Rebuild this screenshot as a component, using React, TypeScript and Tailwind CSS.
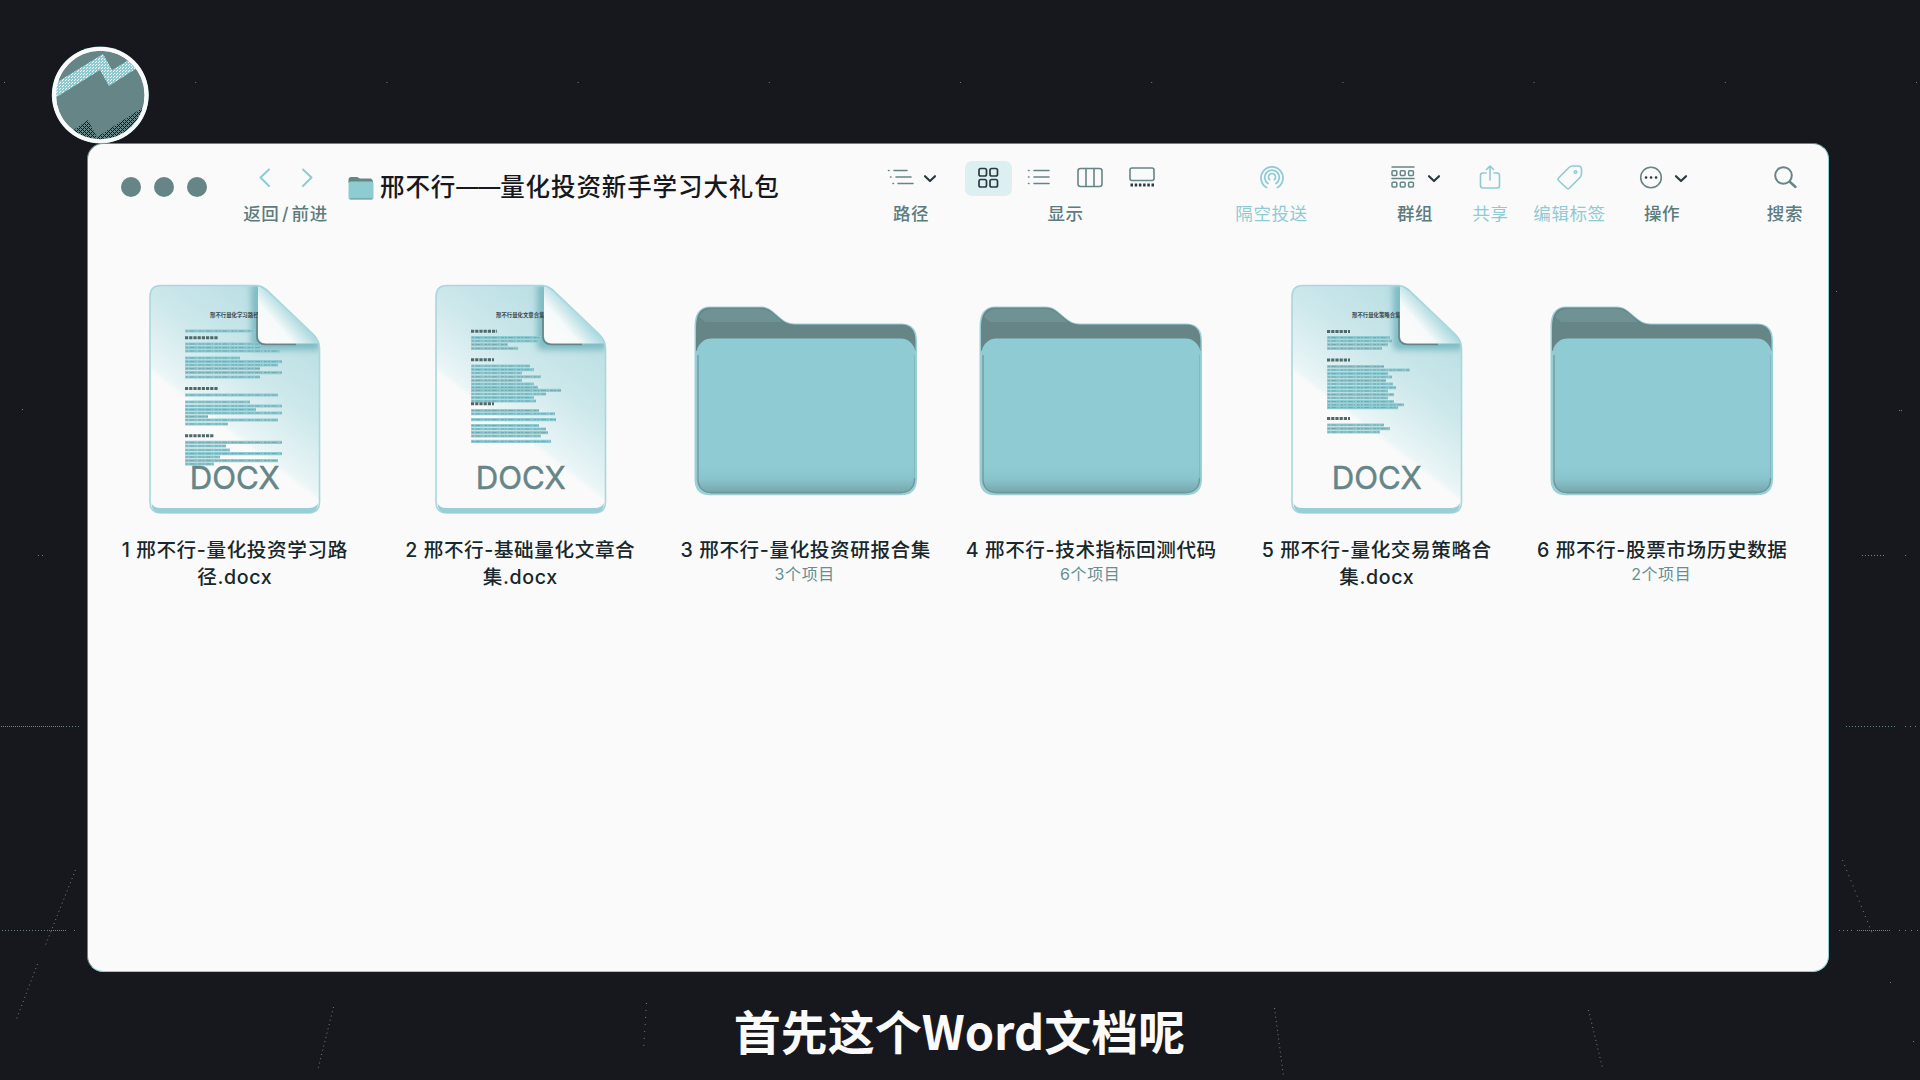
import type { ReactNode } from 'react';

const MID = '#668586';
const LIGHT = '#8ecbd3';

type Line = [y: number, end: number, bold?: boolean];

type Entry = {
  kind: 'doc' | 'folder';
  name: string[];
  note?: string;
  heading?: string;
  lines?: Line[];
};

const files: Entry[] = [
  {
    kind: 'doc',
    name: ['1 邢不行-量化投资学习路', '径.docx'],
    heading: '邢不行量化学习路径',
    lines: [
      [47, 108], [53.7, 70, true], [60, 134], [63.6, 112], [67, 132], [74, 92], [77.6, 134], [81, 130], [84.6, 112],
      [88.6, 134], [93, 112], [104.6, 70, true], [111, 130], [118, 102], [122, 134], [125.6, 108], [129, 134],
      [132.6, 60], [136, 130], [140, 80], [151.8, 66, true], [158.4, 134], [162, 78], [166, 82], [169.6, 134],
      [173, 72], [176.6, 130], [180, 66],
    ],
  },
  {
    kind: 'doc',
    name: ['2 邢不行-基础量化文章合', '集.docx'],
    heading: '邢不行量化文章合集',
    lines: [
      [47.2, 63, true], [53.6, 108], [57, 104], [60.6, 74], [64.4, 84], [75.8, 60, true], [82, 96], [85.6, 100],
      [89, 88], [92.8, 107], [96.4, 88], [100, 100], [103.4, 104], [106.4, 127], [110, 112], [113.6, 100],
      [117, 102], [119.8, 60, true], [126.5, 105], [129.8, 121], [135.6, 122], [141.5, 105], [145, 112],
      [148.6, 114], [152, 107], [157.4, 117],
    ],
  },
  { kind: 'folder', name: ['3 邢不行-量化投资研报合集'], note: '3个项目' },
  { kind: 'folder', name: ['4 邢不行-技术指标回测代码'], note: '6个项目' },
  {
    kind: 'doc',
    name: ['5 邢不行-量化交易策略合', '集.docx'],
    heading: '邢不行量化策略合集',
    lines: [
      [47.4, 60, true], [53.6, 100], [57, 102], [60.6, 98], [64.4, 92], [76, 60, true], [82.5, 94], [86, 120],
      [89.6, 98], [93, 102], [96.6, 96], [100, 103], [103.6, 106], [107, 98], [110.6, 104], [114, 98], [117.6, 104],
      [120.8, 114], [123.6, 108], [134.6, 60, true], [141, 94], [144.6, 100], [148, 90],
    ],
  },
  { kind: 'folder', name: ['6 邢不行-股票市场历史数据'], note: '2个项目' },
];

function DocIcon({ heading, lines, id }: { heading: string; lines: Line[]; id: string }) {
  const outline = 'M13 1.5H109C113 1.5 117 4 121 8L165 50C169 54 171.5 58 171.5 64V218Q171.5 229 160 229H13Q2 229 2 218V13Q2 1.5 13 1.5Z';
  return (
    <svg width="174" height="232" viewBox="0 0 174 232" fill="none">
      <defs>
        <linearGradient id={`${id}-page`} x1="150" y1="20" x2="50" y2="150" gradientUnits="userSpaceOnUse">
          <stop offset="0" stopColor="#b5dde2" />
          <stop offset="0.5" stopColor="#cde8eb" />
          <stop offset="0.84" stopColor="#eaf5f6" />
          <stop offset="0.88" stopColor="#fafafa" />
        </linearGradient>
        <linearGradient id={`${id}-curl`} x1="122" y1="48" x2="144" y2="29" gradientUnits="userSpaceOnUse">
          <stop offset="0" stopColor="#fafafa" />
          <stop offset="0.35" stopColor="#f6fafa" />
          <stop offset="1" stopColor="#aedbe0" />
        </linearGradient>
        <filter id={`${id}-soft`} x="-20%" y="-20%" width="140%" height="140%">
          <feGaussianBlur stdDeviation="3" />
        </filter>
        <clipPath id={`${id}-clip`}>
          <path d={outline} />
        </clipPath>
      </defs>
      <path d={outline} fill={`url(#${id}-page)`} />
      <g clipPath={`url(#${id}-clip)`}>
        <path d="M103 0H130V50H172V66H108Q103 66 103 60Z" fill="#7fbcc4" filter={`url(#${id}-soft)`} />
      </g>
      <text x="62" y="33.2" fontSize="5.4" fontWeight="700" fill="#35484b" className="font-['Noto_Sans_CJK_SC',sans-serif]">{heading}</text>
      {lines.map(([y, end, bold]) => (
        <g key={y}>
          <path d={`M37 ${y}H${end}`} stroke={bold ? '#4d696c' : LIGHT} strokeWidth={bold ? 3 : 3.1} strokeDasharray={bold ? '3.2 1' : undefined} />
          {!bold && <path d={`M38 ${y}H${end}`} stroke="#74a5aa" strokeWidth="1" strokeDasharray="2 1.4 5 1 1 2 3 1" />}
        </g>
      ))}
      <path d="M110 2Q114 3 120 8L165 51Q170 56 171 59.5H117Q110 59 110 52Z" fill={`url(#${id}-curl)`} />
      <path d="M109 34V54Q110 60 117 60.5H148" stroke={MID} strokeWidth="1.6" />
      <path d={outline} stroke="#a9d7dd" strokeWidth="1.6" />
      <path d="M3.5 219Q5 224 13 224H160Q168 224 170 219Q170 229 160 229H13Q3.5 229 3.5 219Z" fill="#98cfd6" />
      <text x="41.8" y="204.5" fontSize="31.8" textLength="90" lengthAdjust="spacingAndGlyphs" fill={MID} stroke={MID} strokeWidth=".5" className="font-['Inter',sans-serif]">DOCX</text>
    </svg>
  );
}

function FolderIcon({ id }: { id: string }) {
  return (
    <svg width="228" height="192" viewBox="0 0 228 192" fill="none">
      <defs>
        <linearGradient id={`${id}-f`} x1="0" y1="160" x2="0" y2="188" gradientUnits="userSpaceOnUse">
          <stop offset="0" stopColor={LIGHT} />
          <stop offset="0.5" stopColor="#89c4cc" />
          <stop offset="0.95" stopColor="#78a8ad" />
        </linearGradient>
      </defs>
      <path d="M3.5 22Q3.5 1.5 19 1.5H70C84 1.5 88 18.5 104 18.5H211Q226 19 226 36V174Q226 190.3 210 190.3H19Q3.5 190.3 3.5 174Z" fill="#9bd0d7" />
      <path d="M5 22Q5 2.5 19 2.5H70C84 2.5 88 19.5 104 19.5H211Q224.5 20 224.5 36V46H5Z" fill={MID} />
      <path d="M8 12Q12 4 20 4H70Q80 4 91 17H14Z" fill="#6f9295" />
      <rect x="5.5" y="33.5" width="219" height="155" rx="15" fill={`url(#${id}-f)`} />
      <path d="M7 50V173Q7 187.5 21 187.5H209Q223.5 187.5 223.5 173" stroke="#70979a" strokeWidth="1.3" />
      <path d="M223.5 50V173" stroke="#83b8be" strokeWidth="1" />
    </svg>
  );
}

function Chevron() {
  return (
    <svg width="14" height="10" viewBox="0 0 14 10" fill="none" stroke="#2b3a3e" strokeWidth="2.2" strokeLinecap="round" strokeLinejoin="round">
      <path d="M2 2.2L7 7L12 2.2" />
    </svg>
  );
}

function Icon({ w = 28, color = MID, sw = 1.6, children }: { w?: number; color?: string; sw?: number; children: ReactNode }) {
  return (
    <svg width={w} height="28" viewBox={`0 0 ${w} 28`} fill="none" stroke={color} strokeWidth={sw} strokeLinecap="round" strokeLinejoin="round">
      {children}
    </svg>
  );
}

function Tool({ label, faded, children }: { label: ReactNode; faded?: boolean; children: ReactNode }) {
  return (
    <div className="flex flex-col items-center">
      <div className="flex h-[38px] items-center">{children}</div>
      <span className={`mt-[5px] h-6 text-[17.5px] leading-6 tracking-[0.6px] whitespace-nowrap ${faded ? 'text-[#8ecbd3]' : 'font-medium text-[#5d7c7e]'}`}>{label}</span>
    </div>
  );
}

const dots = (x1: number, x2: number, y: number, step: number) => <path d={`M${x1} ${y}.5H${x2}`} strokeDasharray={`1 ${step - 1}`} />;

function Backdrop() {
  return (
    <svg className="absolute inset-0" width="1920" height="1080" viewBox="0 0 1920 1080" fill="none" stroke={MID} strokeWidth="1">
      {dots(4, 1920, 82, 191.2)}
      {dots(1, 62, 726, 2)}
      {dots(63, 80, 726, 3)}
      {dots(1846, 1896, 726, 3)}
      {dots(1905, 1918, 726, 5)}
      {dots(2, 48, 930, 3)}
      {dots(49, 66, 930, 2)}
      {dots(74, 75, 930, 2)}
      {dots(1839, 1852, 930, 4)}
      {dots(1857, 1890, 930, 2)}
      {dots(1899, 1920, 930, 6)}
      {dots(1862, 1886, 555, 3)}
      {dots(1905, 1906, 555, 3)}
      {dots(38, 46, 555, 4)}
      {dots(22, 23, 409, 3)}
      {dots(1836, 1837, 291, 3)}
      {dots(1899, 1902, 410, 2)}
      {dots(1890, 1891, 982, 2)}
      {dots(1913, 1914, 1041, 2)}
      <g strokeDasharray="1 3.4">
        <path d="M75.5 870L45.5 945" />
        <path d="M37.5 964L16.5 1019" />
        <path d="M333.5 1007L317.5 1071" />
        <path d="M646.5 1003L643.5 1050" strokeDasharray="1 6" />
        <path d="M1274.5 1008L1283.5 1076" />
        <path d="M1588.5 1010L1602.5 1068" />
        <path d="M1842.5 860L1872.5 934" strokeDasharray="1 4.5" />
      </g>
    </svg>
  );
}

function Avatar() {
  return (
    <svg className="absolute left-[51px] top-[46px]" width="98" height="98" viewBox="0 0 98 98">
      <defs>
        <clipPath id="avatar-clip">
          <circle cx="49.3" cy="49" r="45" />
        </clipPath>
        <pattern id="avatar-band" width="3" height="3" patternUnits="userSpaceOnUse">
          <rect width="3" height="3" fill={LIGHT} />
          <rect width="1" height="1" fill="#fafafa" />
          <rect x="2" y="1" width="1" height="1" fill="#fafafa" />
        </pattern>
        <pattern id="avatar-shade" width="4" height="4" patternUnits="userSpaceOnUse">
          <rect width="4" height="4" fill={MID} />
          <path d="M0 0H1V1H0ZM2 0H3V1H2ZM0 2H1V3H0ZM2 2H3V3H2ZM1 1H2V2H1ZM3 3H4V4H3Z" fill="#17181d" />
        </pattern>
      </defs>
      <circle cx="49.3" cy="49" r="48.5" fill={LIGHT} />
      <circle cx="49.3" cy="49" r="48" fill="#fafafa" />
      <circle cx="49.3" cy="49" r="44.3" fill={MID} />
      <g clipPath="url(#avatar-clip)">
        <path d="M3 38L52 8L61 24L78 14L86 22L58 40L49 24L4 52Z" fill="url(#avatar-band)" />
        <path d="M21 85L37 74L46 91L91 62V94H21Z" fill="url(#avatar-shade)" />
      </g>
      <circle cx="49.3" cy="49" r="46.2" fill="none" stroke="#fafafa" strokeWidth="3.8" />
    </svg>
  );
}

function Toolbar() {
  return (
    <header className="flex h-[90px] pt-[15px] [&>*]:shrink-0">
      <div className="mt-[18px] ml-[33px] flex gap-[13px]">
        <i className="size-5 rounded-full bg-[#668586]" />
        <i className="size-5 rounded-full bg-[#668586]" />
        <i className="size-5 rounded-full bg-[#668586]" />
      </div>
      <div className="ml-[31px] w-[95px]">
        <Tool label={<>返回<span className="mx-[2.5px]">/</span>前进</>}>
          <svg width="56" height="22" viewBox="0 0 56 22" fill="none" stroke={LIGHT} strokeWidth="2" strokeLinecap="round" strokeLinejoin="round">
            <path d="M11 2.5L2.5 10.5L11 19" />
            <path d="M45 2.5L53.5 10.5L45 19" />
          </svg>
        </Tool>
      </div>
      <svg className="mt-[17px] ml-[15px]" width="26" height="26" viewBox="0 0 26 26">
        <path d="M.5 4Q.5 1 3 1H9L12 2.5H22Q25 2.500 25 7H.5Z" fill={MID} />
        <rect x=".5" y="5.500" width="25" height="18.5" rx="2.5" fill={LIGHT} />
        <path d="M2 22.500H24" stroke="#79adb3" strokeWidth="1.2" />
      </svg>
      <h1 className="mt-[10px] ml-[6px] flex w-[402px] text-[24.5px] leading-9 font-medium tracking-[0.9px] whitespace-nowrap text-[#17181d]">
        <span>邢不行</span>
        <span className="text-[22px] tracking-normal">——</span>
        <span>量化投资新手学习大礼包</span>
      </h1>
      <div className="ml-[84px] grid grid-cols-[90px_219px_193px_94px_57px_101px_84px_99px] justify-items-center">
        <Tool label="路径">
          <Icon w={30}>
            <path d="M2.5 6.5H3M8 6.5H21M4.5 13H5M10 13H25M7 19.5H7.5M12 19.5H27" />
          </Icon>
          <span className="mt-0.5 ml-[7px]"><Chevron /></span>
        </Tool>
        <Tool label="显示">
          <div className="flex h-[35px] w-[47px] items-center justify-center rounded-[7px] bg-[#dceff1]">
            <Icon color="#2b3a3e" sw={1.7}>
              <rect x="5" y="4.5" width="7.5" height="7.5" rx="1.8" />
              <rect x="16" y="4.5" width="7.5" height="7.5" rx="1.8" />
              <rect x="5" y="15.5" width="7.5" height="7.5" rx="1.8" />
              <rect x="16" y="15.5" width="7.5" height="7.5" rx="1.8" />
            </Icon>
          </div>
          <span className="ml-[13px]">
            <Icon><path d="M3.5 6.5H4M9 6.5H24M3.5 13H4M9 13H24M3.5 19.5H4M9 19.5H24" /></Icon>
          </span>
          <span className="ml-[23px]">
            <Icon><rect x="2" y="4.5" width="24" height="18" rx="2.5" /><path d="M10 4.5V22M18 4.5V22" /></Icon>
          </span>
          <span className="mr-[11px] ml-[24px]">
            <Icon><rect x="2" y="4" width="24" height="12.5" rx="2" /><path d="M2.5 21H26" stroke="#2b3a3e" strokeWidth="2.8" strokeLinecap="butt" strokeDasharray="2.5 1.7" /></Icon>
          </span>
        </Tool>
        <Tool label="隔空投送" faded>
          <Icon color={LIGHT} sw={1.8}>
            <path d="M8.5 23.5A11 11 0 1 1 19.5 23.5M10 19.5A7.3 7.3 0 1 1 18 19.5M11.5 15.5A3.5 3.5 0 1 1 16.5 15.5" />
          </Icon>
        </Tool>
        <Tool label="群组">
          <Icon sw={1.5}>
            <path d="M3 3H25M3 14.5H25" />
            {[3, 11.3, 19.6].map((x) => [6.7, 18.2].map((y) => <rect key={`${x}-${y}`} x={x} y={y} width="4.8" height="4.8" rx="1" />))}
          </Icon>
          <span className="mt-0.5 ml-[10px]"><Chevron /></span>
        </Tool>
        <Tool label="共享" faded>
          <Icon color={LIGHT}>
            <path d="M10 9H7Q4.5 9 4.5 11.5V21.5Q4.5 24 7 24H21Q23.5 24 23.5 21.5V11.5Q23.5 9 21 9H18M14 16V2M10.5 5.5L14 2L17.5 5.5" />
          </Icon>
        </Tool>
        <Tool label="编辑标签" faded>
          <Icon color={LIGHT}>
            <path d="M2.5 14L13 3.5Q14.500 2 16.5 2H22.5Q25.5 2 25.5 5V9.5Q25.5 12 24 13.5L13.500 24Q12 25.5 10.5 24L2.5 16.5Q1.3 15.3 2.5 14Z" />
            <circle cx="19.5" cy="8" r="1.3" />
          </Icon>
        </Tool>
        <Tool label="操作">
          <Icon>
            <circle cx="14" cy="13.5" r="10.3" />
            <path d="M9 13.5H9.1M14 13.5H14.1M19 13.5H19.1" stroke="#2b3a3e" strokeWidth="2.6" />
          </Icon>
          <span className="mt-0.5 ml-[9px]"><Chevron /></span>
        </Tool>
        <div className="justify-self-end">
          <Tool label="搜索">
            <Icon sw={2}><circle cx="12.5" cy="11.5" r="8.3" /><path d="M18.5 17.5L24.5 23" strokeWidth="2.4" /></Icon>
          </Tool>
        </div>
      </div>
    </header>
  );
}

export default function App() {
  return (
    <div className="relative flex h-[1080px] w-[1920px] flex-col items-center overflow-hidden bg-[#17181d] pt-[143px] font-[Inter,'Noto_Sans_CJK_SC',sans-serif]">
      <Backdrop />
      <main className="relative -ml-[4px] h-[829px] w-[1742px] shrink-0 rounded-[16px] border border-t-[#668586] border-r-[#8ecbd3] border-b-[#8ecbd3] border-l-[#668586] bg-[#fafafa]">
        <Toolbar />
        <section className="mt-[48px] ml-[4px] grid grid-cols-[repeat(6,285.5px)]">
          {files.map((f, i) => (
            <article key={f.name[0]} className="flex flex-col items-center">
              <div className="flex h-[250px] items-start justify-center">
                {f.kind === 'doc' ? (
                  <div className="pt-[2px] pl-px"><DocIcon id={`d${i}`} heading={f.heading!} lines={f.lines!} /></div>
                ) : (
                  <div className="pt-[23px] pr-[2px]"><FolderIcon id={`f${i}`} /></div>
                )}
              </div>
              <p className="mt-[5px] text-center text-[19.6px] leading-[27px] font-medium tracking-[0.6px] whitespace-nowrap text-[#17272b]">
                {f.name.map((part) => <span key={part} className="block">{part}</span>)}
              </p>
              {f.note && <span className="-mt-[2px] mr-[2px] text-[16px] leading-6 tracking-[0.6px] text-[#668f93]">{f.note}</span>}
            </article>
          ))}
        </section>
      </main>
      <Avatar />
      <p className="relative -ml-px mt-[23px] font-['Noto_Sans_CJK_SC',sans-serif] text-[47px] leading-[70px] font-bold whitespace-nowrap text-[#fafafa]">首先这个Word文档呢</p>
    </div>
  );
}
